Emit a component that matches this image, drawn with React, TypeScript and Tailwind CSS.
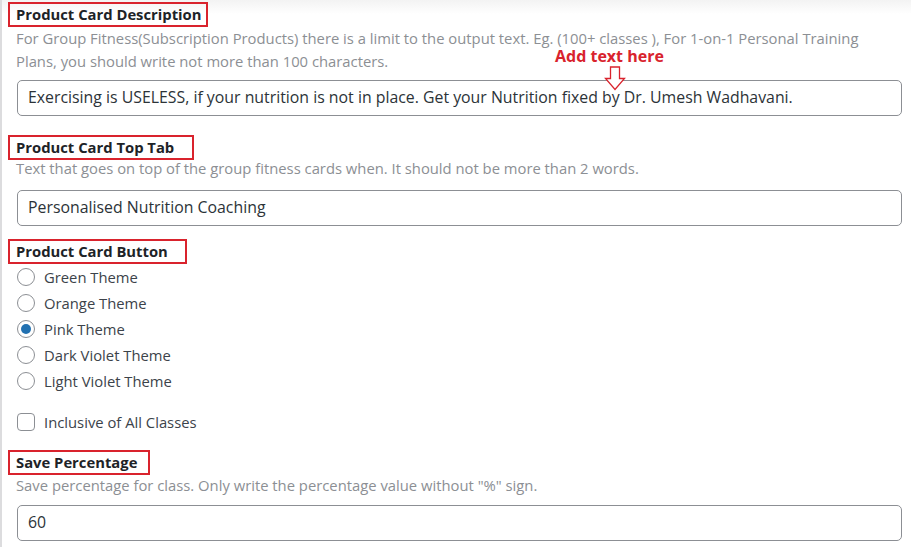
import React from "react";

const font = { fontFamily: '"Open Sans", "Noto Sans", sans-serif' };

function Label({ children, w }: { children: React.ReactNode; w: string }) {
  return (
    <div className="flex">
      <div className={`${w} border-2 border-[#d9232d] pl-[6px] text-[14.8px] leading-[21px] font-bold text-[#1d2327] whitespace-nowrap`}>
        {children}
      </div>
    </div>
  );
}

function Radio({ label, checked }: { label: string; checked?: boolean }) {
  return (
    <div className="flex items-center h-[26px] pl-[9px]">
      <span className="w-[18px] h-[18px] rounded-full border border-[#8c8f94] bg-white flex items-center justify-center">
        {checked && <span className="w-[10px] h-[10px] rounded-full bg-[#2271b1]" />}
      </span>
      <span className="ml-[9px] text-[14.8px] text-[#3c434a]">{label}</span>
    </div>
  );
}

function Input({ value }: { value: string }) {
  return (
    <div className="ml-[9px] h-[36px] border border-[#8c8f94] rounded-[5px] bg-white flex items-center px-[10px] text-[15.85px] text-[#2c3338] whitespace-nowrap">
      {value}
    </div>
  );
}

export default function App() {
  return (
    <div
      style={font}
      className="relative w-[911px] h-[547px] overflow-hidden bg-white border-l-2 border-[#dcdcde] pl-[6px] pr-[9px] pt-[2px]"
    >
      <div className="absolute top-0 left-0 right-0 h-[14px] bg-gradient-to-b from-[#f3f3f3] to-white pointer-events-none" />
      <div className="relative">
        <Label w="w-[200px]">Product Card Description</Label>
        <div className="pl-[8px] text-[14.8px] leading-[23px] text-[#8c8f94]">
          For Group Fitness(Subscription Products) there is a limit to the output text. Eg. (100+ classes ), For 1-on-1 Personal Training Plans, you should write not more than 100 characters.
        </div>
        <div className="mt-[7px]">
          <Input value="Exercising is USELESS, if your nutrition is not in place. Get your Nutrition fixed by Dr. Umesh Wadhavani." />
        </div>

        <div className="mt-[19px]">
          <Label w="w-[186px]">Product Card Top Tab</Label>
        </div>
        <div className="mt-[-3px] pl-[8px] text-[14.8px] leading-[23px] text-[#8c8f94]">
          Text that goes on top of the group fitness cards when. It should not be more than 2 words.
        </div>
        <div className="mt-[10px]">
          <Input value="Personalised Nutrition Coaching" />
        </div>

        <div className="mt-[13px]">
          <Label w="w-[179px]">Product Card Button</Label>
        </div>
        <div className="flex flex-col">
          <Radio label="Green Theme" />
          <Radio label="Orange Theme" />
          <Radio label="Pink Theme" checked />
          <Radio label="Dark Violet Theme" />
          <Radio label="Light Violet Theme" />
        </div>
        <div className="mt-[15px] flex items-center h-[26px] pl-[9px]">
          <span className="w-[18px] h-[18px] rounded-[4px] border border-[#8c8f94] bg-white" />
          <span className="ml-[9px] text-[14.8px] text-[#3c434a]">Inclusive of All Classes</span>
        </div>

        <div className="mt-[15px]">
          <Label w="w-[142px]">Save Percentage</Label>
        </div>
        <div className="mt-[-1px] pl-[8px] text-[14.8px] leading-[23px] text-[#8c8f94]">
          Save percentage for class. Only write the percentage value without "%" sign.
        </div>
        <div className="mt-[8px]">
          <Input value="60" />
        </div>
      </div>

      <div className="absolute left-[553px] top-[50px] text-[16px] leading-[13px] font-bold text-[#d9232d] whitespace-nowrap">
        Add text here
      </div>
      <svg className="absolute left-[602px] top-[66px]" width="22" height="25" viewBox="0 0 22 25">
        <path d="M6.5 1 H15.5 V12.5 H20.5 L11 23.5 L1.5 12.5 H6.5 Z" fill="white" stroke="#d9232d" strokeWidth="1.3" />
      </svg>
    </div>
  );
}
